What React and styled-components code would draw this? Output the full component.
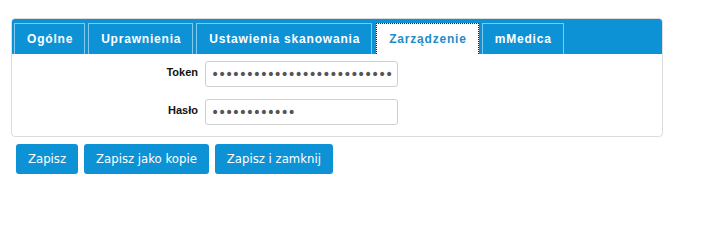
import React from 'react';
import styled, { createGlobalStyle } from 'styled-components';

const GlobalStyle = createGlobalStyle`
  body {
    margin: 0;
    background: #fff;
    font-family: "DejaVu Sans", Verdana, sans-serif;
  }
`;

const Page = styled.div`
  padding: 18px 0 0 11px;
  width: 652px;
`;

const Panel = styled.div`
  border: 1px solid #dcdcdc;
  border-radius: 4px;
  background: #fff;
  overflow: hidden;
`;

const TabBar = styled.div`
  display: flex;
  gap: 3px;
  padding: 4px 0 0 2px;
  background: #0e92d6;
`;

const Tab = styled.div`
  height: 30px;
  padding: 0 11px 0 12px;
  display: flex;
  align-items: center;
  border: 1px solid ${(props) => (props.active ? '#222' : '#7fcaf0')};
  border-style: ${(props) => (props.active ? 'dotted' : 'solid')};
  border-bottom: none;
  background: ${(props) => (props.active ? '#fff' : '#0e92d6')};
  color: ${(props) => (props.active ? '#1f8cc8' : '#fff')};
  font-family: "Liberation Sans", Arial, sans-serif;
  font-weight: bold;
  font-size: 12px;
  letter-spacing: 0.8px;
  margin-left: ${(props) => (props.active ? '1px' : '0')};
`;

const Form = styled.div`
  display: grid;
  grid-template-columns: 186px 193px;
  column-gap: 7px;
  row-gap: 12px;
  padding: 7px 0 11px 0;
  align-items: center;
`;

const Label = styled.label`
  text-align: right;
  font-family: "Liberation Sans", Arial, sans-serif;
  font-weight: bold;
  font-size: 11px;
  color: #111;
  padding-bottom: 4px;
`;

const Input = styled.input`
  box-sizing: border-box;
  width: 193px;
  height: 26px;
  border: 1px solid #cfcfcf;
  border-radius: 3px;
  padding: 0 5px;
  font-family: "DejaVu Sans", sans-serif;
  font-size: 14px;
  letter-spacing: -1.3px;
  color: #555;
  outline: none;
`;

const Actions = styled.div`
  display: flex;
  gap: 6px;
  padding: 7px 0 0 5px;
`;

const Button = styled.button`
  height: 30px;
  padding: 0 12px;
  border: none;
  border-radius: 3px;
  background: #0e92d6;
  color: #fff;
  font-family: "DejaVu Sans", Verdana, sans-serif;
  font-size: 11.7px;
  cursor: pointer;
`;

const tabs = ['Ogólne', 'Uprawnienia', 'Ustawienia skanowania', 'Zarządzenie', 'mMedica'];

const App = () => {
  return (
    <>
      <GlobalStyle />
      <Page>
        <Panel>
          <TabBar>
            {tabs.map((t) => (
              <Tab key={t} active={t === 'Zarządzenie'}>
                {t}
              </Tab>
            ))}
          </TabBar>
          <Form>
            <Label>Token</Label>
            <Input type="password" readOnly value="abcdefghijklmnopqrstuvwxyz0123456789" />
            <Label>Hasło</Label>
            <Input type="password" readOnly value="abcdefghijkl" />
          </Form>
        </Panel>
        <Actions>
          <Button>Zapisz</Button>
          <Button>Zapisz jako kopie</Button>
          <Button>Zapisz i zamknij</Button>
        </Actions>
      </Page>
    </>
  );
};

export default App;
